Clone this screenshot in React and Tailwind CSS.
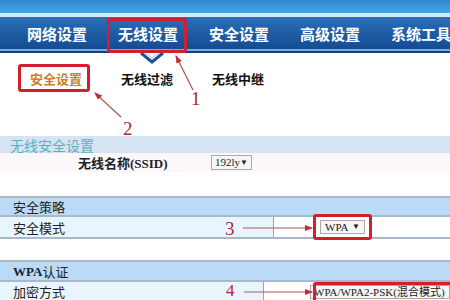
import React from "react";

const cjk = { fontFamily: '"Noto Sans CJK SC", "Noto Sans", sans-serif' };
const serif = { fontFamily: '"Liberation Serif", "Noto Sans CJK SC", serif' };

export default function App() {
  return (
    <div
      className="relative w-[450px] h-[300px] overflow-hidden bg-white text-[#222]"
      style={cjk}
    >
      {/* top band */}
      <div className="h-[13px] bg-gradient-to-b from-[#2f8ad2] to-[#46a6e2]" />
      <div className="h-[4px] bg-[#d8ecf8]" />
      <div className="h-[1px] bg-[#2d6cb2]" />
      {/* nav */}
      <div className="h-[31px] bg-gradient-to-b from-[#2a6db8] to-[#144c92] flex items-center pl-[27px] gap-[31px] text-white font-bold text-[15px] leading-none whitespace-nowrap">
        <span className="shrink-0">网络设置</span>
        <span className="shrink-0">无线设置</span>
        <span className="shrink-0">安全设置</span>
        <span className="shrink-0">高级设置</span>
        <span className="shrink-0">系统工具</span>
      </div>
      <div className="h-[2px] bg-[#7eaad6]" />
      <div className="h-[2px] bg-[#1d3f72]" />
      {/* subnav */}
      <div className="h-[47px] flex items-center pl-[30px] gap-[39px] text-[13px] font-bold leading-none pt-[3px] whitespace-nowrap">
        <span className="text-[#c9802f]">安全设置</span>
        <span className="text-[#111]">无线过滤</span>
        <span className="text-[#111]">无线中继</span>
      </div>
      <div className="h-[36px]" />
      {/* wireless security settings */}
      <div className="h-[17px] bg-[#d6e3f3] flex items-center pl-[10px] text-[14px] text-[#56b2c2] leading-none">
        无线安全设置
      </div>
      <div className="h-[19px] bg-[#fcf8fa] flex items-center">
        <span className="w-[211px] pl-[78px] text-[13px] font-bold leading-none whitespace-nowrap">
          无线名称
          <span style={serif}>(SSID)</span>
        </span>
        <span
          className="h-[15px] w-[41px] border border-[#a9a9a9] bg-[#f6f6f6] flex items-center justify-between px-[3px] text-[11px] leading-none"
          style={serif}
        >
          <span>192ly</span>
          <span className="text-[8px]">▼</span>
        </span>
      </div>
      <div className="h-[24px]" />
      {/* 安全策略 */}
      <div className="h-[2px] bg-[#a9b9c9]" />
      <div className="h-[17px] bg-[#badaf7] flex items-center pl-[13px] text-[13px] leading-none">
        安全策略
      </div>
      <div className="h-[2px] bg-[#a9b9c9]" />
      <div className="h-[20px] bg-[#e9f5fd] flex">
        <div className="w-[274px] border-r border-[#9aa8b4] flex items-center pl-[13px] text-[13px] leading-none">
          安全模式
        </div>
        <div className="flex-1 bg-white flex items-center pl-[46px]">
          <span
            className="h-[14px] w-[45px] border border-[#a9a9a9] bg-[#f6f6f6] flex items-center justify-between px-[4px] text-[11px] leading-none"
            style={serif}
          >
            <span>WPA</span>
            <span className="text-[8px]">▼</span>
          </span>
        </div>
      </div>
      <div className="h-[2px] bg-[#a9b9c9]" />
      <div className="h-[21px]" />
      {/* WPA认证 */}
      <div className="h-[2px] bg-[#a9b9c9]" />
      <div className="h-[18px] bg-[#badaf7] flex items-center pl-[13px] text-[13px] leading-none">
        <span className="font-bold" style={serif}>WPA</span>
        认证
      </div>
      <div className="h-[2px] bg-[#a9b9c9]" />
      <div className="h-[18px] bg-[#e9f5fd] flex">
        <div className="w-[274px] border-r border-[#9aa8b4] flex items-center pl-[13px] text-[13px] leading-none">
          加密方式
        </div>
        <div className="flex-1 bg-white flex items-center pl-[46px] pt-[2px]">
          <span
            className="h-[14px] w-[140px] border border-[#a9a9a9] bg-[#f6f6f6] flex items-center px-[3px] text-[11px] leading-none whitespace-nowrap"
            style={serif}
          >
            WPA/WPA2-PSK(混合模式)
          </span>
        </div>
      </div>

      {/* chevron under active tab */}
      <svg className="absolute left-[140px] top-[52px]" width="24" height="12" viewBox="0 0 24 12">
        <polyline points="1,1 12,10 23,1" fill="none" stroke="#1f4f8c" strokeWidth="3" />
        <polyline points="5,1 12,6 19,1" fill="none" stroke="#a8c8e8" strokeWidth="1" />
      </svg>

      {/* annotation red boxes */}
      <div className="absolute left-[107px] top-[18px] w-[80px] h-[35px] border-[3px] border-[#d21f2e] rounded-[3px]" />
      <div className="absolute left-[18px] top-[64px] w-[72px] h-[28px] border-[3px] border-[#d21f2e] rounded-[3px]" />
      <div className="absolute left-[313px] top-[214px] w-[59px] h-[26px] border-[3px] border-[#d21f2e] rounded-[3px]" />
      <div className="absolute left-[313px] top-[282px] w-[145px] h-[24px] border-[3px] border-[#d21f2e] rounded-[3px]" />

      {/* arrows */}
      <svg className="absolute left-0 top-0" width="450" height="300" viewBox="0 0 450 300">
        <defs>
          <marker id="ah" markerWidth="8" markerHeight="6" refX="7" refY="3" orient="auto" markerUnits="userSpaceOnUse">
            <polygon points="0,0 8,3 0,6" fill="#c62a36" />
          </marker>
        </defs>
        <line x1="193" y1="90" x2="176" y2="56" stroke="#a85858" strokeWidth="1.2" markerEnd="url(#ah)" />
        <line x1="121" y1="117" x2="95" y2="93" stroke="#a85858" strokeWidth="1.2" markerEnd="url(#ah)" />
        <line x1="243" y1="228" x2="312" y2="228" stroke="#a85858" strokeWidth="1.2" markerEnd="url(#ah)" />
        <line x1="244" y1="292" x2="312" y2="292" stroke="#a85858" strokeWidth="1.2" markerEnd="url(#ah)" />
      </svg>

      {/* numbers */}
      <span className="absolute left-[191px] top-[89px] text-[19px] leading-none text-[#a82a2a]" style={serif}>
        1
      </span>
      <span className="absolute left-[123px] top-[119px] text-[19px] leading-none text-[#a82a2a]" style={serif}>
        2
      </span>
      <span className="absolute left-[225px] top-[219px] text-[19px] leading-none text-[#a82a2a]" style={serif}>
        3
      </span>
      <span className="absolute left-[226px] top-[282px] text-[17px] leading-none text-[#a82a2a]" style={serif}>
        4
      </span>
    </div>
  );
}
